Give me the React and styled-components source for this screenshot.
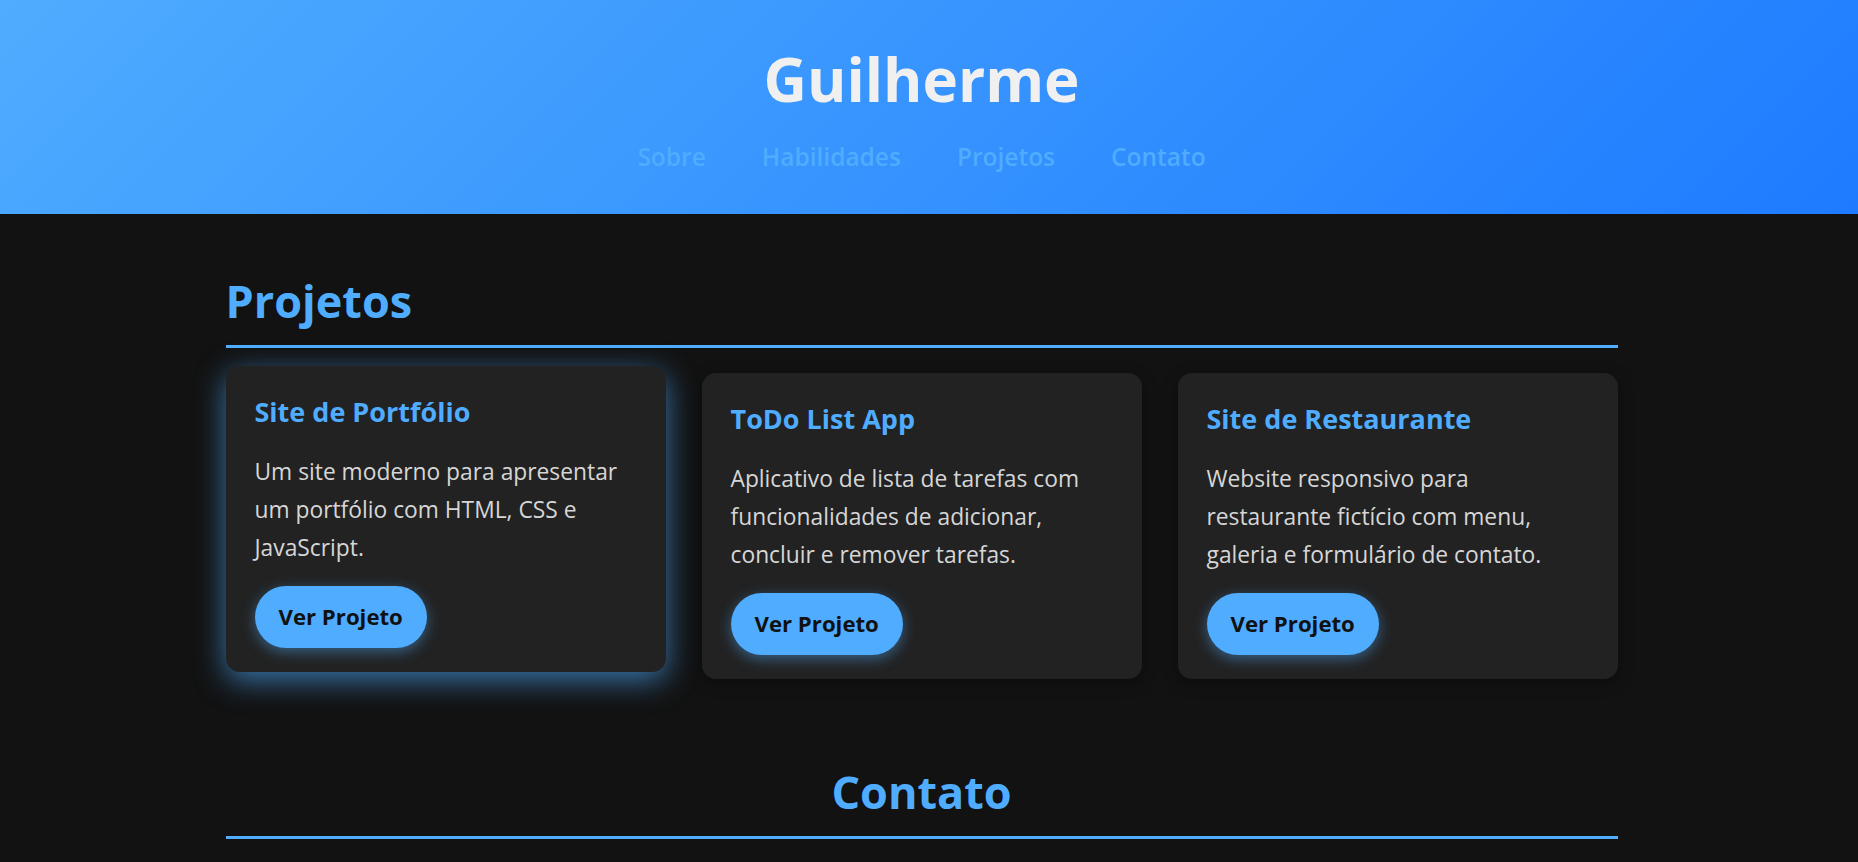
import React from "react";
import styled, { createGlobalStyle } from "styled-components";

const GlobalStyle = createGlobalStyle`
  * {
    box-sizing: border-box;
  }
  html, body {
    margin: 0;
    padding: 0;
    overflow: hidden;
  }
  body {
    background: #121212;
    color: #d4d4d4;
    font-family: "Open Sans", "Noto Sans", "Liberation Sans", sans-serif;
  }
`;

const projects = [
  {
    title: "Site de Portfólio",
    text: "Um site moderno para apresentar um portfólio com HTML, CSS e JavaScript.",
    active: true,
  },
  {
    title: "ToDo List App",
    text: "Aplicativo de lista de tarefas com funcionalidades de adicionar, concluir e remover tarefas.",
  },
  {
    title: "Site de Restaurante",
    text: "Website responsivo para restaurante fictício com menu, galeria e formulário de contato.",
  },
];

const navItems = ["Sobre", "Habilidades", "Projetos", "Contato"];

export default function App() {
  return (
    <>
      <GlobalStyle />
      <Header>
        <Title>Guilherme</Title>
        <Nav>
          {navItems.map((item) => (
            <NavLink key={item} href={`#${item.toLowerCase()}`}>
              {item}
            </NavLink>
          ))}
        </Nav>
      </Header>

      <Main>
        <Section id="projetos">
          <SectionTitle>Projetos</SectionTitle>
          <CardGrid>
            {projects.map((p) => (
              <Card key={p.title} $active={p.active}>
                <CardTitle>{p.title}</CardTitle>
                <CardText>{p.text}</CardText>
                <Button href="#">Ver Projeto</Button>
              </Card>
            ))}
          </CardGrid>
        </Section>

        <Section id="contato" $last>
          <SectionTitle $center>Contato</SectionTitle>
        </Section>
      </Main>
    </>
  );
}

const Header = styled.header`
  background: linear-gradient(135deg, #4facfe 0%, #1e7bff 100%);
  padding: 43px 15px 40px 0;
  text-align: center;
`;

const Title = styled.h1`
  margin: 0;
  font-size: 60px;
  line-height: 72px;
  font-weight: 700;
  color: #f0f0f0;
`;

const Nav = styled.nav`
  margin-top: 25px;
  display: flex;
  justify-content: center;
  gap: 56px;
`;

const NavLink = styled.a`
  color: #4facfe;
  text-decoration: none;
  font-size: 24.5px;
  line-height: 34px;
  font-weight: 600;
`;

const Main = styled.main`
  padding-right: 15px;
`;

const Section = styled.section`
  max-width: 1392px;
  margin: 0 auto;
  padding: ${(p) => (p.$last ? "58px 0 0" : "57px 0 25px")};
`;

const SectionTitle = styled.h2`
  margin: 0;
  padding-bottom: 14px;
  border-bottom: 3px solid #4facfe;
  color: #4facfe;
  font-size: 45px;
  line-height: 60px;
  font-weight: 700;
  text-align: ${(p) => (p.$center ? "center" : "left")};
`;

const CardGrid = styled.div`
  margin-top: 25px;
  display: grid;
  grid-template-columns: repeat(3, 1fr);
  gap: 36px;
`;

const Card = styled.article`
  background: #222222;
  border-radius: 14px;
  padding: 29px 29px 24px;
  box-shadow: ${(p) =>
    p.$active
      ? "0 8px 30px rgba(79, 172, 254, 0.65)"
      : "0 4px 15px rgba(0, 0, 0, 0.35)"};
  transform: ${(p) => (p.$active ? "translateY(-7px)" : "none")};
  transition: transform 0.3s, box-shadow 0.3s;
`;

const CardTitle = styled.h3`
  margin: 0;
  color: #4facfe;
  font-size: 27px;
  line-height: 34px;
  font-weight: 700;
`;

const CardText = styled.p`
  margin: 24px 0 19px;
  max-width: 372px;
  font-size: 22.8px;
  line-height: 38px;
  color: #d6d6d6;
`;

const Button = styled.a`
  display: inline-block;
  padding: 16px 24px;
  border-radius: 32px;
  background: #4facfe;
  color: #111111;
  font-size: 22.2px;
  line-height: 30px;
  font-weight: 700;
  text-decoration: none;
  box-shadow: 0 4px 14px rgba(79, 172, 254, 0.45);
`;
